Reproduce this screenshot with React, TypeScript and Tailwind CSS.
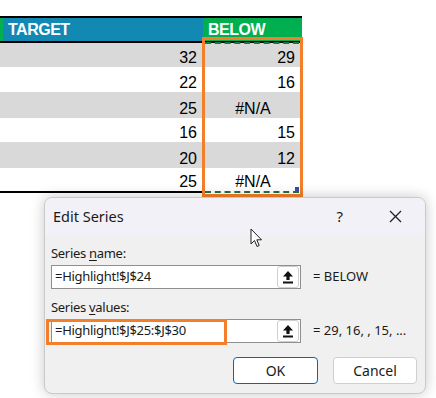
import React from "react";

const rows: { t: string; b: string; gray: boolean; h: string }[] = [
  { t: "32", b: "29", gray: true, h: "h-[24px]" },
  { t: "22", b: "16", gray: false, h: "h-[25px]" },
  { t: "25", b: "#N/A", gray: true, h: "h-[26px]" },
  { t: "16", b: "15", gray: false, h: "h-[24px]" },
  { t: "20", b: "12", gray: true, h: "h-[26px]" },
  { t: "25", b: "#N/A", gray: false, h: "h-[23px]" },
];

function UploadBtn() {
  return (
    <div className="w-[22px] h-[22px] rounded-[3px] border border-[#cfcfcf] bg-white flex items-center justify-center">
      <svg width="12" height="14" viewBox="0 0 12 14">
        <path d="M6 1 L11 6.5 H7.6 V10 H4.4 V6.5 H1 Z" fill="#111" />
        <rect x="1" y="11.5" width="10" height="2" fill="#111" />
      </svg>
    </div>
  );
}

export default function App() {
  const dlgFont = { fontFamily: '"Noto Sans", "Open Sans", sans-serif' };
  return (
    <div className="w-[436px] h-[398px] bg-white overflow-hidden relative">
      {/* spreadsheet */}
      <div
        className="relative w-[302px] mt-[16px]"
        style={{ fontFamily: '"Liberation Sans", Arial, sans-serif' }}
      >
        <div className="h-[2px] bg-black" />
        <div className="flex h-[23px]">
          <div className="w-[3px] bg-[#00b050]" />
          <div className="w-[200px] bg-[#1189b3] text-white font-bold text-[16px] tracking-[-0.5px] leading-[24px] pl-[5px]">
            TARGET
          </div>
          <div className="w-[99px] bg-[#00b050] text-white font-bold text-[16px] tracking-[-0.5px] leading-[24px] pl-[5px]">
            BELOW
          </div>
        </div>
        <div className="h-[2px] bg-black" />
        {rows.map((r, i) => (
          <div
            key={i}
            className={`flex ${r.h} ${r.gray ? "bg-[#d9d9d9]" : "bg-white"} text-[16px] leading-[18px] text-black`}
          >
            <div className="w-[203px] flex items-end justify-end pr-[6px]">
              {r.t}
            </div>
            <div
              className={`w-[99px] flex items-end ${
                r.b === "#N/A" ? "justify-center pl-[1px]" : "justify-end pr-[7px]"
              }`}
            >
              {r.b}
            </div>
          </div>
        ))}
        <div className="h-[2px] bg-black w-[203px]" />
        {/* marching ants */}
        <div className="absolute left-[205px] top-[26px] w-[94px] h-0 border-t-2 border-dashed border-[#217346]" />
        <div className="absolute left-[205px] top-[175px] w-[94px] h-0 border-t-2 border-dashed border-[#217346]" />
        <div className="absolute left-[295px] top-[171px] w-[4px] h-[4px] bg-[#3a4ca8]" />
        {/* orange highlight */}
        <div className="absolute left-[202px] top-[21px] w-[101px] h-[160px] border-[3px] border-[#f47f2a]" />
      </div>

      {/* dialog */}
      <div
        className="ml-[44px] mt-[4px] w-[382px] h-[197px] rounded-[8px] border border-[#c9c9c9] bg-[#f0f0f0] shadow-[0_0_14px_rgba(0,0,0,0.22)] overflow-hidden relative"
        style={dlgFont}
      >
        <div className="h-[37px] bg-[#f2f1f7] flex items-center pl-[8px] text-[#1a1a1a]">
          <span className="text-[14.5px]">Edit Series</span>
          <span className="ml-auto text-[15px] mr-[46px]">?</span>
          <svg width="13" height="13" viewBox="0 0 13 13" className="mr-[23px]">
            <path d="M1 1 L12 12 M12 1 L1 12" stroke="#222" strokeWidth="1.3" />
          </svg>
        </div>
        <div className="pl-[6px] pr-[8px] pt-[10px] text-[13px] text-[#1a1a1a]">
          <div className="h-[16px] leading-[16px] tracking-[-0.3px]">
            Series <span className="underline underline-offset-2">n</span>ame:
          </div>
          <div className="mt-[4px] flex items-center">
            <div className="w-[250px] h-[24px] bg-white border border-[#8f8f8f] flex items-center pl-[3px] pr-[1px] text-[13px] tracking-[-0.3px]">
              <span className="flex-1">=Highlight!$J$24</span>
              <UploadBtn />
            </div>
            <span className="ml-[12px] text-[13px]">= BELOW</span>
          </div>
          <div className="mt-[10px] h-[16px] leading-[16px] tracking-[-0.3px]">
            Series <span className="underline underline-offset-2">v</span>alues:
          </div>
          <div className="mt-[4px] flex items-center">
            <div className="w-[250px] h-[24px] bg-white border border-[#8f8f8f] flex items-center pl-[3px] pr-[1px] text-[13px] tracking-[-0.3px]">
              <span className="flex-1">=Highlight!$J$25:$J$30</span>
              <UploadBtn />
            </div>
            <span className="ml-[12px] text-[13px]">= 29, 16, , 15, ...</span>
          </div>
          <div className="mt-[14px] flex justify-end gap-[15px]">
            <button className="w-[85px] h-[27px] rounded-[4px] border border-[#0067c0] bg-white text-[14px] text-[#1a1a1a]">
              OK
            </button>
            <button className="w-[84px] h-[27px] rounded-[4px] border border-[#cfcfcf] bg-white text-[14px] text-[#1a1a1a]">
              Cancel
            </button>
          </div>
        </div>
        {/* orange highlight around values */}
        <div className="absolute left-[1px] top-[121px] w-[181px] h-[26px] border-[3px] border-[#f47f2a]" />
        {/* cursor */}
        <svg
          className="absolute left-[205px] top-[30px]"
          width="14"
          height="21"
          viewBox="0 0 14 21"
        >
          <path
            d="M1 1 L1 16 L4.5 12.5 L7 18.5 L9.2 17.5 L6.8 11.8 L11.5 11.8 Z"
            fill="white"
            stroke="#222"
            strokeWidth="1"
            strokeLinejoin="round"
          />
        </svg>
      </div>
    </div>
  );
}
